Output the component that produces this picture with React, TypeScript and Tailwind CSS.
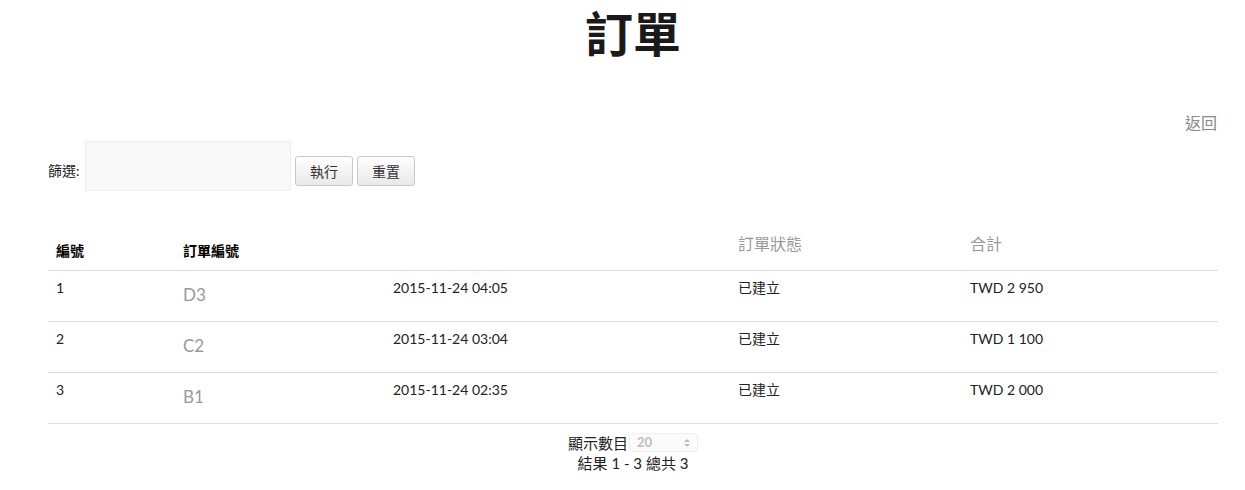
import React from "react";

const font = { fontFamily: 'Lato, "Noto Sans CJK TC", sans-serif' };

const rows = [
  { id: "1", code: "D3", date: "2015-11-24 04:05", status: "已建立", total: "TWD 2 950" },
  { id: "2", code: "C2", date: "2015-11-24 03:04", status: "已建立", total: "TWD 1 100" },
  { id: "3", code: "B1", date: "2015-11-24 02:35", status: "已建立", total: "TWD 2 000" },
];

export default function App() {
  return (
    <div className="min-h-[490px] bg-white text-[#222]" style={font}>
      <div className="ml-[48px] w-[1170px]">
        <h1 className="pt-[8px] h-[68px] text-center text-[48px] leading-[52px] font-bold text-[#1a1a1a]">訂單</h1>
        <div className="mt-[45px] h-[20px] flex justify-end">
          <a className="text-[16px] leading-[20px] text-[#888] mr-[1px]">返回</a>
        </div>
        <div className="mt-[8px] flex items-start h-[50px]">
          <label className="mt-[20px] w-[37px] text-[14px] leading-[20px] text-[#222]">篩選:</label>
          <input className="h-[50px] w-[206px] bg-[#f9f9f9] border border-[#eeeeee] outline-none" />
          <button className="ml-[4px] mt-[15px] h-[30px] w-[58px] rounded-[3px] border border-[#c8c8c8] bg-gradient-to-b from-white to-[#e8e8e8] text-[14px] text-[#333]">執行</button>
          <button className="ml-[4px] mt-[15px] h-[30px] w-[58px] rounded-[3px] border border-[#c8c8c8] bg-gradient-to-b from-white to-[#e8e8e8] text-[14px] text-[#333]">重置</button>
        </div>
        <table className="mt-[41px] w-[1170px] table-fixed border-collapse">
          <colgroup>
            <col className="w-[127px]" />
            <col className="w-[210px]" />
            <col className="w-[345px]" />
            <col className="w-[232px]" />
            <col className="w-[256px]" />
          </colgroup>
          <thead>
            <tr className="h-[38px] border-b border-[#dddddd]">
              <th className="align-bottom text-left pl-[8px] pb-[9px] text-[14px] leading-[20px] font-bold text-black">編號</th>
              <th className="align-bottom text-left pl-[8px] pb-[9px] text-[14px] leading-[20px] font-bold text-black">訂單編號</th>
              <th></th>
              <th className="align-top text-left pl-[8px] pt-[1px] text-[16px] leading-[22px] font-normal text-[#999]">訂單狀態</th>
              <th className="align-top text-left pl-[8px] pt-[1px] text-[16px] leading-[22px] font-normal text-[#999]">合計</th>
            </tr>
          </thead>
          <tbody>
            {rows.map((r) => (
              <tr key={r.id} className="h-[51px] border-b border-[#dddddd] align-top">
                <td className="pl-[8px] pt-[7px] text-[14px] leading-[20px]">{r.id}</td>
                <td className="pl-[8px] pt-[12px] text-[17px] leading-[24px] text-[#999]">{r.code}</td>
                <td className="pl-[8px] pt-[7px] text-[14px] leading-[20px]">{r.date}</td>
                <td className="pl-[8px] pt-[7px] text-[14px] leading-[20px]">{r.status}</td>
                <td className="pl-[8px] pt-[7px] text-[14px] leading-[20px]">{r.total}</td>
              </tr>
            ))}
          </tbody>
        </table>
        <div className="mt-[9px] flex justify-center items-center h-[20px]">
          <span className="text-[15px] leading-[20px] text-[#222]">顯示數目</span>
          <div className="ml-[1px] h-[19px] w-[69px] rounded-[4px] border border-[#eeeeee] bg-[#fbfbfb] flex items-center justify-between px-[7px]">
            <span className="text-[13px] font-bold text-[#bbbbbb] leading-none">20</span>
            <svg width="6" height="10" viewBox="0 0 6 10">
              <path d="M0 4 L3 1 L6 4 Z" fill="#bbbbbb" />
              <path d="M0 6 L3 9 L6 6 Z" fill="#bbbbbb" />
            </svg>
          </div>
        </div>
        <div className="text-center text-[15px] leading-[20px] text-[#222]">結果 1 - 3 總共 3</div>
      </div>
    </div>
  );
}
